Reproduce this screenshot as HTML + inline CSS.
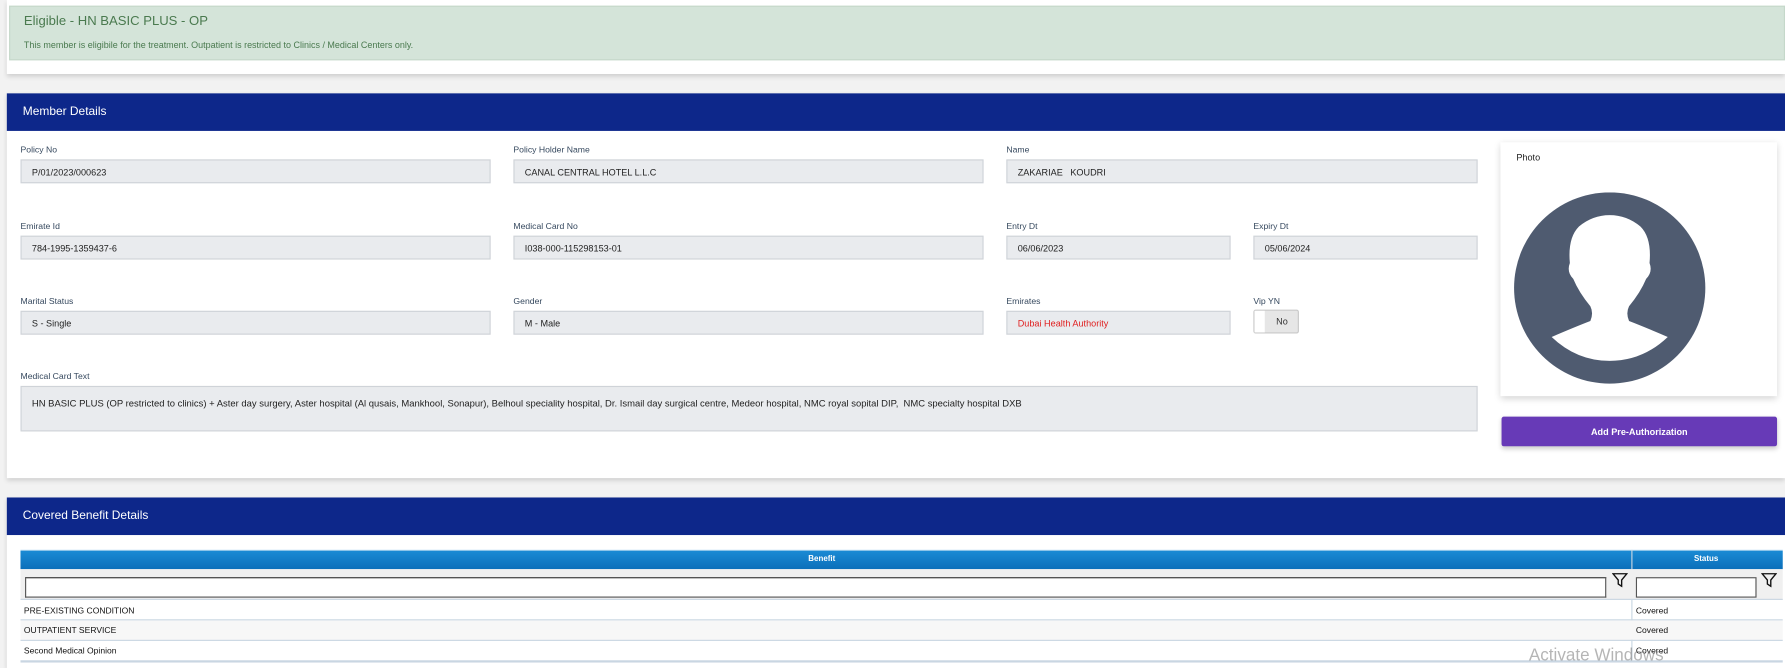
<!DOCTYPE html>
<html><head><meta charset="utf-8"><style>
*{box-sizing:border-box;margin:0;padding:0}
html,body{width:1785px;height:663px;overflow:hidden;background:#f2f2f2;font-family:"Liberation Sans",sans-serif}
#w{position:absolute;left:0;top:0;width:1568px;height:582px;transform:scale(1.1384);transform-origin:0 0}
.a{position:absolute}
.card{position:absolute;background:#fff;box-shadow:0 2px 4px rgba(0,0,0,.15)}
.hd{position:absolute;left:0;right:0;top:0;height:33px;background:#0d278a;color:#fff;font-size:10.5px;padding:10px 0 0 14px}
.lb{position:absolute;font-size:7.6px;color:#35485e}
.in{position:absolute;height:21px;background:#e9ebee;border:1px solid #cfd3d8;font-size:8px;color:#222;padding:6px 0 0 9px}
.td{position:absolute;font-size:7.5px;color:#111}
</style></head><body><div id="w">
<div class="card" style="left:6px;top:0;width:1562px;height:65px"></div>
<div class="a" style="left:8px;top:5px;width:1560px;height:48px;background:#d4e4d9;border:1px solid #c5d8ca"></div>
<div class="a" style="left:21px;top:13px;font-size:11.5px;color:#4a7a4f">Eligible - HN BASIC PLUS - OP</div>
<div class="a" style="left:21px;top:35px;font-size:7.9px;color:#4a7a4f">This member is eligibile for the treatment. Outpatient is restricted to Clinics / Medical Centers only.</div>

<div class="card" style="left:6px;top:82px;width:1562px;height:338px"><div class="hd">Member Details</div></div>
<div class="lb" style="left:18px;top:127px">Policy No</div><div class="in" style="left:18px;top:140px;width:413px">P/01/2023/000623</div>
<div class="lb" style="left:451px;top:127px">Policy Holder Name</div><div class="in" style="left:451px;top:140px;width:413px">CANAL CENTRAL HOTEL L.L.C</div>
<div class="lb" style="left:884px;top:127px">Name</div><div class="in" style="left:884px;top:140px;width:414px">ZAKARIAE &nbsp;&nbsp;KOUDRI</div>
<div class="lb" style="left:18px;top:194px">Emirate Id</div><div class="in" style="left:18px;top:207px;width:413px">784-1995-1359437-6</div>
<div class="lb" style="left:451px;top:194px">Medical Card No</div><div class="in" style="left:451px;top:207px;width:413px">I038-000-115298153-01</div>
<div class="lb" style="left:884px;top:194px">Entry Dt</div><div class="in" style="left:884px;top:207px;width:197px">06/06/2023</div>
<div class="lb" style="left:1101px;top:194px">Expiry Dt</div><div class="in" style="left:1101px;top:207px;width:197px">05/06/2024</div>
<div class="lb" style="left:18px;top:260px">Marital Status</div><div class="in" style="left:18px;top:273px;width:413px">S - Single</div>
<div class="lb" style="left:451px;top:260px">Gender</div><div class="in" style="left:451px;top:273px;width:413px">M - Male</div>
<div class="lb" style="left:884px;top:260px">Emirates</div><div class="in" style="left:884px;top:273px;width:197px;color:#e02020">Dubai Health Authority</div>
<div class="lb" style="left:1101px;top:260px">Vip YN</div>
<div class="a" style="left:1101px;top:272px;width:40px;height:21px;border:1px solid #c8c8c8;border-radius:2px;background:#e6e6e6"><div class="a" style="left:0;top:0;width:9px;height:19px;background:#fff"></div><div class="a" style="left:19px;top:5px;font-size:8px;color:#333">No</div></div>
<div class="lb" style="left:18px;top:326px">Medical Card Text</div>
<div class="in" style="left:18px;top:339px;width:1280px;height:40px;padding-top:9px;font-size:8.3px">HN BASIC PLUS (OP restricted to clinics) + Aster day surgery, Aster hospital (Al qusais, Mankhool, Sonapur), Belhoul speciality hospital, Dr. Ismail day surgical centre, Medeor hospital, NMC royal sopital DIP, &nbsp;NMC specialty hospital DXB</div>

<div class="card" style="left:1318px;top:125px;width:243px;height:223px;box-shadow:0 2px 6px rgba(0,0,0,.18)"></div>
<div class="a" style="left:1332px;top:134px;font-size:8px;color:#222">Photo</div>
<svg class="a" style="left:1329px;top:169px" width="170" height="170" viewBox="0 0 170 170">
<circle cx="85" cy="84" r="84" fill="#4f5b70"/>
<path d="M34 127 Q55 118 68 113 Q71 106 68 100 Q58 88 53 76 Q47 70 50 62 Q48 40 58 30 Q70 20 85 20 Q100 20 112 30 Q122 40 120 62 Q123 70 117 76 Q112 88 102 100 Q99 106 102 113 Q115 118 136 127 Q114 148 85 148 Q56 148 34 127Z" fill="#fff"/>
</svg>
<div class="a" style="left:1319px;top:366px;width:242px;height:26px;background:#673ab7;border-radius:2px;box-shadow:0 2px 4px rgba(0,0,0,.2);color:#fff;font-size:8px;font-weight:bold;text-align:center;padding-top:9px">Add Pre-Authorization</div>

<div class="card" style="left:6px;top:437px;width:1562px;height:150px"><div class="hd">Covered Benefit Details</div></div>
<div class="a" style="left:18px;top:483px;width:1548px;height:17px;background:linear-gradient(#1a8ad4,#0b6fba);border-top:1px solid #8cc3e8"></div>
<div class="a" style="left:1433px;top:483px;width:1px;height:97px;background:#c9d6e2"></div>
<div class="a" style="left:710px;top:488px;font-size:7px;color:#fff;font-weight:bold">Benefit</div>
<div class="a" style="left:1488px;top:488px;font-size:7px;color:#fff;font-weight:bold">Status</div>
<div class="a" style="left:18px;top:500px;width:1548px;height:27px;background:#f0f0f0;border-bottom:1px solid #c9d6e2"></div>
<div class="a" style="left:22px;top:507px;width:1389px;height:18px;background:#fff;border:1px solid #555;border-top-color:#333"></div>
<div class="a" style="left:1437px;top:507px;width:106px;height:18px;background:#fff;border:1px solid #555"></div>
<svg class="a" style="left:1416px;top:503px" width="14" height="13" viewBox="0 0 14 13"><path d="M1 1H13L8.5 6.5V12L5.5 10V6.5Z" fill="none" stroke="#111" stroke-width="1.2"/></svg>
<svg class="a" style="left:1547px;top:503px" width="14" height="13" viewBox="0 0 14 13"><path d="M1 1H13L8.5 6.5V12L5.5 10V6.5Z" fill="none" stroke="#111" stroke-width="1.2"/></svg>
<div class="a" style="left:18px;top:544px;width:1548px;height:1px;background:#c9d6e2"></div>
<div class="a" style="left:18px;top:545px;width:1548px;height:17px;background:#f7f7f7"></div>
<div class="a" style="left:18px;top:562px;width:1548px;height:1px;background:#c9d6e2"></div>
<div class="a" style="left:18px;top:580px;width:1548px;height:2px;background:#c9d6e2"></div>
<div class="td" style="left:21px;top:532px">PRE-EXISTING CONDITION</div><div class="td" style="left:1437px;top:532px">Covered</div>
<div class="td" style="left:21px;top:549px">OUTPATIENT SERVICE</div><div class="td" style="left:1437px;top:549px">Covered</div>
<div class="td" style="left:21px;top:567px">Second Medical Opinion</div><div class="td" style="left:1437px;top:567px">Covered</div>
<div class="a" style="left:1343px;top:567px;font-size:15px;color:rgba(120,120,120,.55)">Activate Windows</div>
</div></body></html>
